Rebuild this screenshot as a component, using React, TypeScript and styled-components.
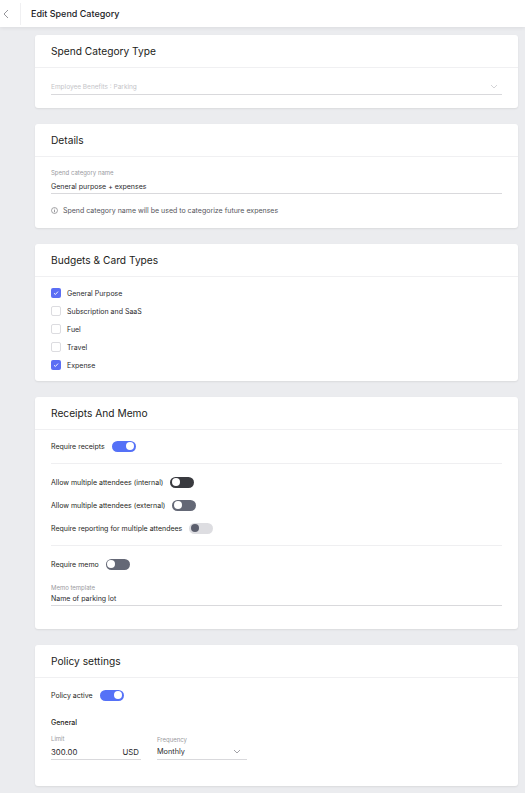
import React from "react";
import styled, { createGlobalStyle, css } from "styled-components";

const GlobalStyle = createGlobalStyle`
  html, body {
    margin: 0;
    padding: 0;
    background: #ebecef;
    font-family: Inter, "Noto Sans", "Liberation Sans", sans-serif;
    color: #1f1f22;
  }
  * { box-sizing: border-box; }
`;

type ToggleKind = "on" | "dark" | "gray" | "disabled";

const CHECKS = [
  { label: "General Purpose", checked: true },
  { label: "Subscription and SaaS", checked: false },
  { label: "Fuel", checked: false },
  { label: "Travel", checked: false },
  { label: "Expense", checked: true },
];

export default function App() {
  return (
    <>
      <GlobalStyle />
      <Page>
        <TopBar>
          <BackButton>
            <svg width="6" height="10" viewBox="0 0 6 10">
              <path d="M5 1 L1 5 L5 9" fill="none" stroke="#8a8a90" strokeWidth="0.9" />
            </svg>
          </BackButton>
          <PageTitle>Edit Spend Category</PageTitle>
        </TopBar>

        <Content>
          <Card title="Spend Category Type">
            <SelectBox>
              <Placeholder>Employee Benefits : Parking</Placeholder>
              <Chevron color="#c8c8cc" />
            </SelectBox>
          </Card>

          <Card title="Details">
            <DetailsBody>
              <Field label="Spend category name" value="General purpose + expenses" tall />
              <InfoNote>
                <svg width="7" height="7" viewBox="0 0 8 8">
                  <circle cx="4" cy="4" r="3.4" fill="none" stroke="#6c6c72" strokeWidth="0.7" />
                  <line x1="4" y1="3.5" x2="4" y2="6" stroke="#6c6c72" strokeWidth="0.8" />
                  <circle cx="4" cy="2.3" r="0.5" fill="#6c6c72" />
                </svg>
                Spend category name will be used to categorize future expenses
              </InfoNote>
            </DetailsBody>
          </Card>

          <Card title="Budgets & Card Types">
            <CheckList>
              {CHECKS.map((c) => (
                <CheckRow key={c.label}>
                  <Check checked={c.checked} />
                  {c.label}
                </CheckRow>
              ))}
            </CheckList>
          </Card>

          <Card title="Receipts And Memo">
            <ReceiptsBody>
              <ToggleRow label="Require receipts" kind="on" />
              <Separator />
              <ToggleGroup>
                <ToggleRow label="Allow multiple attendees (internal)" kind="dark" />
                <ToggleRow label="Allow multiple attendees (external)" kind="gray" />
                <ToggleRow label="Require reporting for multiple attendees" kind="disabled" />
              </ToggleGroup>
              <Separator />
              <ToggleRow label="Require memo" kind="gray" />
              <MemoField>
                <Field label="Memo template" value="Name of parking lot" />
              </MemoField>
            </ReceiptsBody>
          </Card>

          <Card title="Policy settings">
            <PolicyBody>
              <ToggleRow label="Policy active" kind="on" />
              <SubTitle>General</SubTitle>
              <FieldRow>
                <SmallField>
                  <FieldLabel>Limit</FieldLabel>
                  <PolicyValue>
                    <span>300.00</span>
                    <span>USD</span>
                  </PolicyValue>
                </SmallField>
                <SmallField $offset={1}>
                  <FieldLabel>Frequency</FieldLabel>
                  <PolicyValue $offset={1}>
                    <span>Monthly</span>
                    <Chevron color="#8a8a90" />
                  </PolicyValue>
                </SmallField>
              </FieldRow>
            </PolicyBody>
          </Card>
        </Content>
      </Page>
    </>
  );
}

function Card({ title, children }: { title: string; children: React.ReactNode }) {
  return (
    <CardBox>
      <CardHeader>{title}</CardHeader>
      {children}
    </CardBox>
  );
}

function Field({ label, value, tall }: { label: string; value: string; tall?: boolean }) {
  return (
    <FieldBox>
      <FieldLabel>{label}</FieldLabel>
      <FieldValue $tall={tall}>{value}</FieldValue>
    </FieldBox>
  );
}

function Check({ checked }: { checked: boolean }) {
  return (
    <Checkbox $checked={checked}>
      {checked && (
        <svg width="6" height="6" viewBox="0 0 6 6">
          <path d="M1 3.2 L2.4 4.5 L5 1.6" fill="none" stroke="#fff" strokeWidth="0.9" />
        </svg>
      )}
    </Checkbox>
  );
}

function ToggleRow({ label, kind }: { label: string; kind: ToggleKind }) {
  return (
    <ToggleLine>
      {label}
      <Toggle $kind={kind}>
        <Knob $kind={kind} />
      </Toggle>
    </ToggleLine>
  );
}

function Chevron({ color }: { color: string }) {
  return (
    <svg width="8" height="5" viewBox="0 0 8 5">
      <path d="M1 1 L4 4 L7 1" fill="none" stroke={color} strokeWidth="0.8" />
    </svg>
  );
}

const trackColor: Record<ToggleKind, string> = {
  on: "#5571f7",
  dark: "#393a3f",
  gray: "#646876",
  disabled: "#dddde1",
};

const Page = styled.div`
  min-height: 793px;
  padding-bottom: 20px;
`;

const TopBar = styled.div`
  display: flex;
  align-items: center;
  height: 27px;
  background: #ffffff;
  box-shadow: 0 1px 4px rgba(0, 0, 0, 0.07);
`;

const BackButton = styled.div`
  display: flex;
  align-items: center;
  justify-content: center;
  width: 21px;
  height: 22px;
  padding-right: 9px;
  border-right: 1px solid #f0f0f2;
`;

const PageTitle = styled.div`
  padding-left: 10px;
  font-size: 9px;
  font-weight: 500;
  color: #222226;
`;

const Content = styled.div`
  display: flex;
  flex-direction: column;
  gap: 16px;
  padding: 8px 7px 0 35px;
`;

const CardBox = styled.div`
  background: #ffffff;
  border-radius: 3px;
  box-shadow: 0 1px 2px rgba(0, 0, 0, 0.08);
`;

const CardHeader = styled.div`
  display: flex;
  align-items: center;
  height: 33px;
  padding: 0 16px;
  border-bottom: 1px solid #f0f0f2;
  font-size: 10.2px;
  font-weight: 400;
  color: #1c1c20;
`;

const SelectBox = styled.div`
  display: flex;
  align-items: center;
  justify-content: space-between;
  height: 14px;
  margin: 13px 16px 13px;
  padding: 0 4px 2px 0;
  border-bottom: 1px solid #d9d9dc;
`;

const Placeholder = styled.span`
  font-size: 6.5px;
  color: #c4c4c8;
`;

const DetailsBody = styled.div`
  padding: 12px 16px 13px;
`;

const FieldBox = styled.div`
  display: flex;
  flex-direction: column;
`;

const FieldLabel = styled.div`
  font-size: 6px;
  line-height: 8px;
  color: #9a9aa0;
`;

const FieldValue = styled.div<{ $tall?: boolean }>`
  display: flex;
  align-items: flex-end;
  justify-content: space-between;
  height: ${({ $tall }) => ($tall ? 17 : 14)}px;
  padding: 0 4px 2px 0;
  border-bottom: 1px solid #d9d9dc;
  font-size: 7px;
  line-height: 9px;
  color: #2a2a2e;
`;

const PolicyValue = styled.div<{ $offset?: number }>`
  display: flex;
  align-items: flex-end;
  justify-content: space-between;
  height: ${({ $offset }) => 17 - ($offset ?? 0)}px;
  padding: 0 2px 2px 0;
  border-bottom: 1px solid #d9d9dc;
  font-size: ${({ $offset }) => ($offset ? 7.3 : 7.8)}px;
  line-height: 10px;
  color: #2a2a2e;
  svg {
    margin: 0 4px 3px 0;
  }
`;

const InfoNote = styled.div`
  display: flex;
  align-items: center;
  gap: 5px;
  margin-top: 12px;
  font-size: 7px;
  line-height: 9px;
  color: #55555b;
`;

const CheckList = styled.div`
  display: flex;
  flex-direction: column;
  gap: 8px;
  padding: 11px 16px 11px;
`;

const CheckRow = styled.div`
  display: flex;
  align-items: center;
  gap: 6px;
  height: 10px;
  font-size: 7px;
  color: #2a2a2e;
`;

const Checkbox = styled.div<{ $checked: boolean }>`
  display: flex;
  align-items: center;
  justify-content: center;
  width: 10px;
  height: 10px;
  border-radius: 2px;
  ${({ $checked }) =>
    $checked
      ? css`
          background: #5b6ef4;
        `
      : css`
          background: #ffffff;
          border: 1px solid #dcdce0;
        `}
`;

const ReceiptsBody = styled.div`
  display: flex;
  flex-direction: column;
  padding: 10px 16px 23px;
`;

const Separator = styled.div`
  height: 1px;
  margin: 11px 0 12px;
  background: #efeff1;
`;

const ToggleGroup = styled.div`
  display: flex;
  flex-direction: column;
  gap: 11px;
`;

const ToggleLine = styled.div`
  display: flex;
  align-items: center;
  gap: 7px;
  height: 12px;
  font-size: 7px;
  color: #1f1f23;
`;

const Toggle = styled.div<{ $kind: ToggleKind }>`
  display: flex;
  align-items: center;
  justify-content: ${({ $kind }) => ($kind === "on" ? "flex-end" : "flex-start")};
  width: 24px;
  height: 11px;
  padding: 0 1.5px;
  border-radius: 6px;
  background: ${({ $kind }) => trackColor[$kind]};
`;

const Knob = styled.div<{ $kind: ToggleKind }>`
  width: 8px;
  height: 8px;
  border-radius: 50%;
  background: ${({ $kind }) => ($kind === "disabled" ? "#5c5f6e" : "#ffffff")};
`;

const MemoField = styled.div`
  margin-top: 14px;
`;

const PolicyBody = styled.div`
  display: flex;
  flex-direction: column;
  padding: 11px 16px 26px;
`;

const SubTitle = styled.div`
  margin-top: 17px;
  font-size: 7px;
  font-weight: 500;
  color: #1f1f23;
`;

const FieldRow = styled.div`
  display: flex;
  gap: 16px;
  margin-top: 8px;
`;

const SmallField = styled.div<{ $offset?: number }>`
  display: flex;
  flex-direction: column;
  width: 90px;
  padding-top: ${({ $offset }) => $offset ?? 0}px;
`;
